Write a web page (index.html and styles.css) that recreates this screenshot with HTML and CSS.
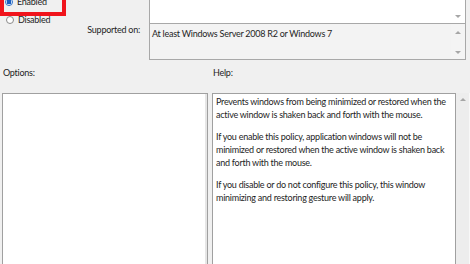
FILE: index.html
```html
<!DOCTYPE html>
<html>
<head>
  <meta charset="utf-8">
  <link rel="stylesheet" href="styles.css">
</head>
<body>
  <div class="policy">

    <div class="policy-head">
      <div class="policy-state">
        <div class="highlight">
          <label class="radio radio-on"><span class="radio-dot"></span>Enabled</label>
        </div>
        <label class="radio"><span class="radio-dot"></span>Disabled</label>
        <div class="field-label">Supported on:</div>
      </div>

      <div class="policy-fields">
        <div class="textbox textbox-comment">
          <div class="textbox-body"></div>
          <div class="scroll">
            <span class="scroll-arrow scroll-down"></span>
          </div>
        </div>
        <div class="textbox textbox-supported">
          <div class="textbox-body">At least Windows Server 2008 R2 or Windows 7</div>
          <div class="scroll">
            <span class="scroll-arrow scroll-up"></span>
            <span class="scroll-arrow scroll-down"></span>
          </div>
        </div>
      </div>
    </div>

    <div class="policy-panes">
      <div class="pane pane-options">
        <div class="pane-title">Options:</div>
        <div class="pane-box"></div>
      </div>
      <div class="pane pane-help">
        <div class="pane-title">Help:</div>
        <div class="help-wrap">
          <div class="pane-box help-text">
            <p>Prevents windows from being minimized or restored when the<br>active window is shaken back and forth with the mouse.</p>
            <p>If you enable this policy, application windows will not be<br>minimized or restored when the active window is shaken back<br>and forth with the mouse.</p>
            <p>If you disable or do not configure this policy, this window<br>minimizing and restoring gesture will apply.</p>
          </div>
          <div class="scroll">
            <span class="scroll-arrow scroll-up"></span>
          </div>
        </div>
      </div>
    </div>

  </div>
</body>
</html>
```

FILE: styles.css
```css
* {
  margin: 0;
  padding: 0;
  box-sizing: border-box;
}

body {
  width: 470px;
  height: 264px;
  overflow: hidden;
  background: #f0f0f0;
  font-family: Lato, "Open Sans", sans-serif;
  font-size: 9px;
  letter-spacing: -0.25px;
  line-height: 12px;
  color: #1e1e1e;
}

.policy-head {
  display: flex;
  height: 60px;
}

.policy-state {
  width: 149px;
  flex-shrink: 0;
}

.highlight {
  width: 66px;
  height: 29px;
  margin-top: -13px;
  padding: 5px 0 0 1px;
  border: 4px solid #f0141c;
}

.radio {
  display: flex;
  align-items: center;
  gap: 4px;
  height: 12px;
  padding-left: 6px;
}

.highlight .radio {
  padding-left: 0;
}

.radio + .field-label,
.highlight + .radio {
  margin-top: -2px;
}

.radio-dot {
  width: 8px;
  height: 8px;
  border-radius: 50%;
  border: 1px solid #8a8a8a;
  background: #fff;
}

.radio-on .radio-dot {
  border-color: #2a6fc9;
  background: radial-gradient(circle, #1b5fc0 0 2.2px, #fff 2.6px);
}

.field-label {
  margin-top: 2px;
  padding-right: 9px;
  text-align: right;
}

.policy-fields {
  width: 317px;
  display: flex;
  flex-direction: column;
}

.textbox {
  display: flex;
  border: 1px solid #a8a8a8;
  border-top: none;
}

.textbox-comment {
  height: 24px;
  background: #fff;
}

.textbox-supported {
  height: 36px;
  background: #f3f3f3;
}

.textbox-body {
  flex-grow: 1;
  padding: 4px 2px;
}

.scroll {
  width: 14px;
  flex-shrink: 0;
  display: flex;
  flex-direction: column;
  align-items: center;
  justify-content: space-between;
  padding: 7px 0 5px;
  background: #f4f4f4;
}

.textbox-comment .scroll {
  justify-content: flex-end;
  background: #fff;
}

.scroll-arrow {
  width: 0;
  height: 0;
  border-left: 3px solid transparent;
  border-right: 3px solid transparent;
}

.scroll-up {
  border-bottom: 3px solid #a6a6a6;
}

.scroll-down {
  border-top: 3px solid #a6a6a6;
}

.policy-panes {
  display: flex;
  gap: 4px;
  padding: 7px 0 0 2px;
}

.pane-title {
  height: 26px;
  padding-left: 1px;
}

.pane-options {
  width: 206px;
}

.pane-help {
  width: 258px;
}

.pane-box {
  height: 180px;
  background: #fff;
  border: 1px solid #a0a0a0;
}

.pane-options .pane-box {
  box-shadow: inset -2px 0 0 #e6e6e6;
}

.help-wrap {
  display: flex;
}

.help-text {
  width: 244px;
  padding: 1px 3px;
  line-height: 13px;
}

.help-text p {
  margin-bottom: 9px;
  white-space: nowrap;
}

.help-wrap .scroll {
  justify-content: flex-start;
  padding-top: 5px;
  background: #ededed;
  border-right: 1px solid #f8f8f8;
}
```
